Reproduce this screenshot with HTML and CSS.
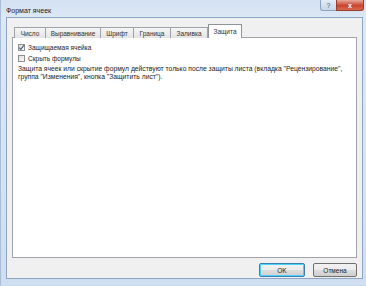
FILE: index.html
```html
<!DOCTYPE html>
<html lang="ru">
<head>
<meta charset="utf-8">
<link rel="stylesheet" href="styles.css">
</head>
<body>
<div class="window">
  <div class="titlebar">
    <span class="title">Формат ячеек</span>
    <div class="caption-btns">
      <span class="cbtn help">?</span>
      <span class="cbtn close">x</span>
    </div>
  </div>
  <div class="client">
    <div class="tabs">
      <span class="tab t1">Число</span>
      <span class="tab t2">Выравнивание</span>
      <span class="tab t3">Шрифт</span>
      <span class="tab t4">Граница</span>
      <span class="tab t5">Заливка</span>
      <span class="tab t6 active">Защита</span>
    </div>
    <div class="panel">
      <label class="check"><span class="box checked"><svg viewBox="0 0 7 7" width="7" height="7"><path d="M1.2 3.6 L2.8 5.3 L5.9 1.3" fill="none" stroke="#4a5f87" stroke-width="1.2"/></svg></span><span class="lbl">Защищаемая ячейка</span></label>
      <label class="check"><span class="box"></span><span class="lbl">Скрыть формулы</span></label>
      <p class="note">Защита ячеек или скрытие формул действуют только после защиты листа (вкладка "Рецензирование",<br>группа "Изменения", кнопка "Защитить лист").</p>
    </div>
    <div class="buttons">
      <span class="btn ok">OK</span>
      <span class="btn">Отмена</span>
    </div>
  </div>
</div>
</body>
</html>
```

FILE: styles.css
```css
html, body {
  margin: 0;
  padding: 0;
  background: #ffffff;
}
body {
  font-family: "Liberation Sans", Arial, sans-serif;
  font-size: 6.5px;
  color: #1e1e1e;
}
.window {
  width: 366px;
  height: 286px;
  box-sizing: border-box;
  background: linear-gradient(to bottom, #d3e1f2 0px, #dde8f5 18px, #cfdef0 100%);
  border-left: 1px solid #a9bdd6;
  border-bottom: 1px solid #c9d9ec;
  display: flex;
  flex-direction: column;
}
.titlebar {
  height: 17px;
  display: flex;
  align-items: flex-start;
  justify-content: space-between;
  flex: none;
}
.title {
  margin: 7px 0 0 5px;
  font-size: 7px;
  color: #222;
}
.caption-btns {
  display: flex;
  margin-right: 2px;
}
.cbtn {
  height: 10px;
  display: flex;
  align-items: center;
  justify-content: center;
  font-size: 7px;
  border: 1px solid #8ea5c2;
  border-top: none;
}
.help {
  width: 15px;
  background: linear-gradient(to bottom, #e3ecf7, #c6d6ea);
  color: #555;
  border-radius: 0 0 0 3px;
  border-right: none;
}
.close {
  width: 26px;
  background: linear-gradient(to bottom, #e9a99c, #c9452f 55%, #d66a4f);
  color: #fff;
  font-weight: bold;
  border-color: #9a3b2c;
  border-radius: 0 0 3px 0;
}
.client {
  flex: 1;
  margin: 0 3px 6px 5px;
  background: #f0f0f0;
  border: 1px solid #8ea6c4;
  padding: 6px 5px 0 5px;
  display: flex;
  flex-direction: column;
}
.tabs {
  display: flex;
  align-items: flex-end;
  height: 14px;
  padding-left: 2px;
  position: relative;
  z-index: 1;
  margin-bottom: -1px;
}
.tab {
  height: 11px;
  box-sizing: border-box;
  border: 1px solid #9ea3aa;
  border-bottom: none;
  margin-right: -1px;
  background: linear-gradient(to bottom, #f6f6f6, #e4e4e4);
  display: flex;
  align-items: center;
  justify-content: center;
  color: #333;
}
.t1 { width: 32px; }
.t2 { width: 56px; }
.t3 { width: 34px; }
.t4 { width: 38px; }
.t5 { width: 38px; }
.t6 { width: 34px; }
.tab.active {
  height: 14px;
  background: #ffffff;
  border-color: #8f949b;
  padding-bottom: 1px;
  margin-left: 1px;
}
.panel {
  height: 221px;
  box-sizing: border-box;
  background: #ffffff;
  border: 1px solid #a0a4aa;
  padding: 4px 5px;
}
.check {
  display: flex;
  align-items: center;
  height: 11px;
  gap: 3px;
}
.box {
  width: 7px;
  height: 7px;
  box-sizing: border-box;
  border: 1px solid #8e8f8f;
  background: linear-gradient(135deg, #dcdcdc, #fbfbfb);
  display: flex;
  align-items: center;
  justify-content: center;
  position: relative;
}
.box svg {
  position: absolute;
  left: -1px;
  top: -1px;
}
.lbl {
  color: #222;
}
.note {
  margin: 1px 0 0 0;
  font-size: 6.75px;
  line-height: 7.5px;
  color: #222;
  white-space: nowrap;
}
.buttons {
  display: flex;
  justify-content: flex-end;
  gap: 8px;
  margin-top: 5px;
  padding-right: 0;
}
.btn {
  width: 44px;
  height: 14px;
  box-sizing: border-box;
  border: 1px solid #707070;
  border-radius: 2px;
  background: linear-gradient(to bottom, #f2f2f2 0%, #ebebeb 50%, #dddddd 51%, #cfcfcf 100%);
  display: flex;
  align-items: center;
  justify-content: center;
  color: #222;
}
.btn.ok {
  width: 46px;
  border-color: #3c7fb1;
  box-shadow: inset 0 0 0 1px #48d4fd;
}
```
